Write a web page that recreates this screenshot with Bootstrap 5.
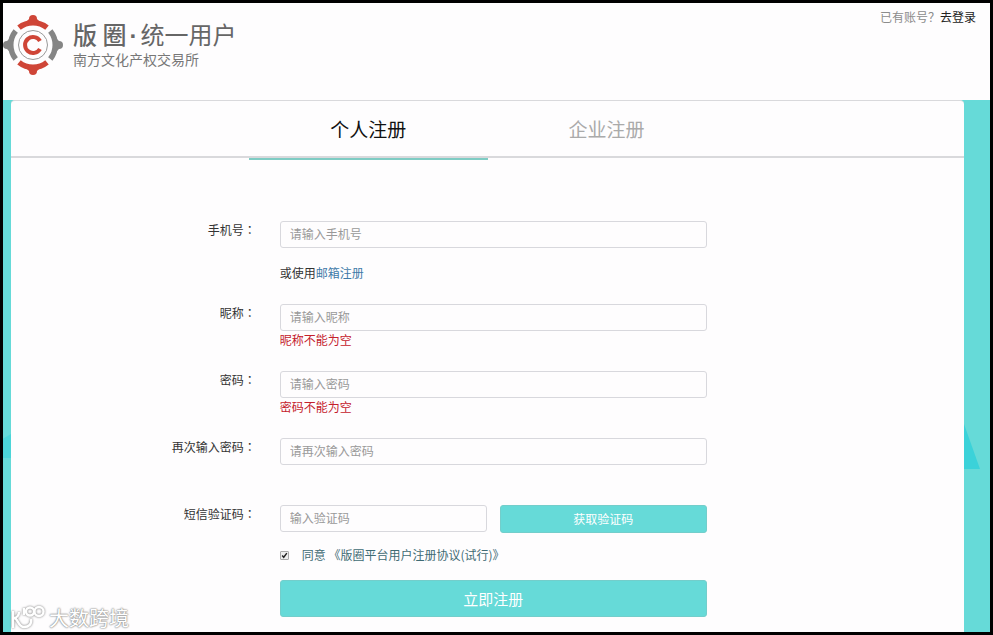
<!DOCTYPE html>
<html lang="zh-CN">
<head>
<meta charset="utf-8">
<meta name="viewport" content="width=device-width, initial-scale=1">
<title>版圈·统一用户</title>
<link href="https://cdn.jsdelivr.net/npm/bootstrap@5.3.0/dist/css/bootstrap.min.css" rel="stylesheet">
<style>
  :root { --teal: #66dad8; --line: #d9d9dc; }
  body { font: 12px/18px "Noto Sans CJK SC", sans-serif; color: #333; background: #fefdfe; }
  a { text-decoration: none; }
  .frame { border: 3px solid #000; }
  .topbar { padding: 5px 14px 24px 0; }
  .brand { color: #666; padding-top: 4px; }
  .brand-text { padding: 8px 0 0 10px; }
  .brand-title { font-size: 24px; line-height: 28px; }
  .brand-dot { font-family: "Liberation Sans", sans-serif; font-weight: 700; padding: 0 3px; }
  .brand-sub { font-size: 14px; line-height: 18px; color: #777; }
  .to-login { color: #222; }
  .asking { color: #8c8c8c; }
  .stage { background: var(--teal); padding: 0 26px 0 8px; }
  .stage::before, .stage::after { content: ""; position: absolute; background: #3bd2d9; }
  .stage::after { right: 10px; top: 324px; width: 16px; height: 45px; clip-path: polygon(0 0, 100% 100%, 0 100%); }
  .stage::before { left: 0; top: 334px; width: 8px; height: 24px; opacity: .6; clip-path: polygon(0 20%, 100% 0, 100% 100%, 0 100%); }
  .panel { background: #fefdfe; border-top: 1px solid var(--line); border-radius: 4px 4px 0 0; padding-bottom: 15px; }
  .tabs { border-bottom: 2px solid var(--line); height: 57px; margin-bottom: 63px; }
  .tab { font-size: 19px; line-height: 28px; color: #aaa; background: none; border: 0; border-bottom: 2px solid transparent; height: 59px; padding-top: 0; }
  .tab.active { color: #111; border-color: #7fccc4; }
  .label-col { width: 28.2%; padding-right: 24px; }
  .colon { font-family: "Noto Sans CJK TC", sans-serif; }
  .field-col { width: 44.8%; }
  .entry { margin-bottom: 22px; }
  .field { height: 27px; padding: 0 9px 2px; font-size: 12px; line-height: 18px; border: 1px solid #d8d8dd; border-radius: 3px; background: #fefdfe; color: #444; }
  .field::placeholder { color: #999; }
  .hint { min-height: 18px; }
  .hint-gap { margin-top: 16px; }
  .error { color: #c4202c; }
  .mail-link { color: #3e7aa8; }
  .terms { color: #3f6b74; }
  .agree-row { gap: 13px; margin: 13px 0 16px; }
  .tick { appearance: none; width: 9px; height: 9px; border: 1px solid #aaa; background: #eee; border-radius: 1px; }
  .tick:checked { background: #eee url("data:image/svg+xml,%3Csvg xmlns='http://www.w3.org/2000/svg' viewBox='0 0 9 9'%3E%3Cpath d='M1.5 4.5l2 2.3L7.5 1.5' fill='none' stroke='%23222' stroke-width='1.8'/%3E%3C/svg%3E") center / 100%; }
  .act { background: var(--teal); color: #fff; border: 1px solid #73cecb; border-radius: 3px; }
  .act-code { height: 28px; }
  .act-main { height: 37px; font-size: 15px; }
  .code-row { gap: 13px; }
  .stamp { left: 6px; bottom: 0; color: #fff; font-size: 20px; line-height: 28px; text-shadow: 0 0 1px #888, 0 0 2px #999, 0 0 2px #aaa; }
  .stamp svg { filter: drop-shadow(0 0 1px #777); }
</style>
<script src="https://cdn.jsdelivr.net/npm/bootstrap@5.3.0/dist/js/bootstrap.bundle.min.js"></script>
</head>
<body>
<div class="frame min-vh-100 d-flex flex-column position-relative">
  <header class="topbar d-flex justify-content-between align-items-start">
    <div class="brand d-flex">
      <svg width="60" height="64" viewBox="0 0 60 64" aria-hidden="true">
        <g transform="translate(30 33)" fill="none">
          <g stroke-width="5.5">
            <path d="M-14 -17.3A22.3 22.3 0 0 1 14 -17.3M-14 17.3A22.3 22.3 0 0 0 14 17.3" stroke="#cf4537"/>
            <path d="M-17.3 -14A22.3 22.3 0 0 0 -17.3 14M17.3 -14A22.3 22.3 0 0 1 17.3 14" stroke="#858585"/>
          </g>
          <g fill="#cf4537"><circle cy="-26" r="4"/><circle cy="26" r="4"/><path d="M-4 -26L-10 -20H10L4 -26ZM-4 26L-10 20H10L4 26Z"/></g>
          <g fill="#858585"><circle cx="-26" r="4"/><circle cx="26" r="4"/><path d="M-26 -4L-20 -10V10L-26 4ZM26 -4L20 -10V10L26 4Z"/></g>
          <circle r="14.5" stroke="#999" stroke-width="1"/>
          <path d="M7 -4A8 8 0 1 0 7 4" stroke="#cf4537" stroke-width="4"/>
        </g>
      </svg>
      <div class="brand-text">
        <div class="brand-title"><span class="fw-medium">版 圈</span><span class="brand-dot">·</span>统一用户</div>
        <div class="brand-sub">南方文化产权交易所</div>
      </div>
    </div>
    <div><span class="asking">已有账号？</span><a class="to-login" href="#">去登录</a></div>
  </header>

  <main class="stage flex-grow-1 d-flex position-relative">
    <div class="panel w-100">
      <div class="tabs row g-0 justify-content-center" role="tablist">
        <button class="tab active col-3" type="button" role="tab" aria-selected="true">个人注册</button>
        <button class="tab col-3" type="button" role="tab" aria-selected="false">企业注册</button>
      </div>
      <form>
        <div class="entry d-flex">
          <label class="label-col text-end" for="phone">手机号<span class="colon" lang="zh-TW">：</span></label>
          <div class="field-col">
            <input class="field w-100 d-block" id="phone" type="tel" placeholder="请输入手机号">
            <div class="hint hint-gap">或使用<a class="mail-link" href="#">邮箱注册</a></div>
          </div>
        </div>
        <div class="entry d-flex">
          <label class="label-col text-end" for="nick">昵称<span class="colon" lang="zh-TW">：</span></label>
          <div class="field-col">
            <input class="field w-100 d-block" id="nick" type="text" placeholder="请输入昵称">
            <div class="hint error">昵称不能为空</div>
          </div>
        </div>
        <div class="entry d-flex">
          <label class="label-col text-end" for="pass">密码<span class="colon" lang="zh-TW">：</span></label>
          <div class="field-col">
            <input class="field w-100 d-block" id="pass" type="password" placeholder="请输入密码">
            <div class="hint error">密码不能为空</div>
          </div>
        </div>
        <div class="entry d-flex">
          <label class="label-col text-end" for="again">再次输入密码<span class="colon" lang="zh-TW">：</span></label>
          <div class="field-col">
            <input class="field w-100 d-block" id="again" type="password" placeholder="请再次输入密码">
            <div class="hint"></div>
          </div>
        </div>
        <div class="d-flex">
          <label class="label-col text-end" for="code">短信验证码<span class="colon" lang="zh-TW">：</span></label>
          <div class="field-col">
            <div class="code-row d-flex">
              <input class="field w-50" id="code" type="text" placeholder="输入验证码">
              <button class="act act-code w-50" type="button">获取验证码</button>
            </div>
            <div class="agree-row d-flex align-items-center">
              <input class="tick" id="agree" type="checkbox" checked>
              <label class="terms" for="agree">同意 <a class="terms" href="#">《版圈平台用户注册协议(试行)》</a></label>
            </div>
            <button class="act act-main w-100 d-block" type="submit">立即注册</button>
          </div>
        </div>
      </form>
    </div>
  </main>

  <div class="stamp position-absolute d-flex align-items-center">
    <svg class="me-1" width="36" height="28" viewBox="0 0 36 28" fill="none" stroke="#fff" stroke-width="2.4" aria-hidden="true">
      <path d="M4 7V24M10 8C10 11 8 14 5 14C9 14 9 23 15 23C20 23 23 20 22 15"/>
      <path d="M15 4V11"/><circle cx="21" cy="7.5" r="4"/><circle cx="30" cy="7.5" r="4.5"/>
    </svg>
    <span>大数跨境</span>
  </div>
</div>
</body>
</html>
